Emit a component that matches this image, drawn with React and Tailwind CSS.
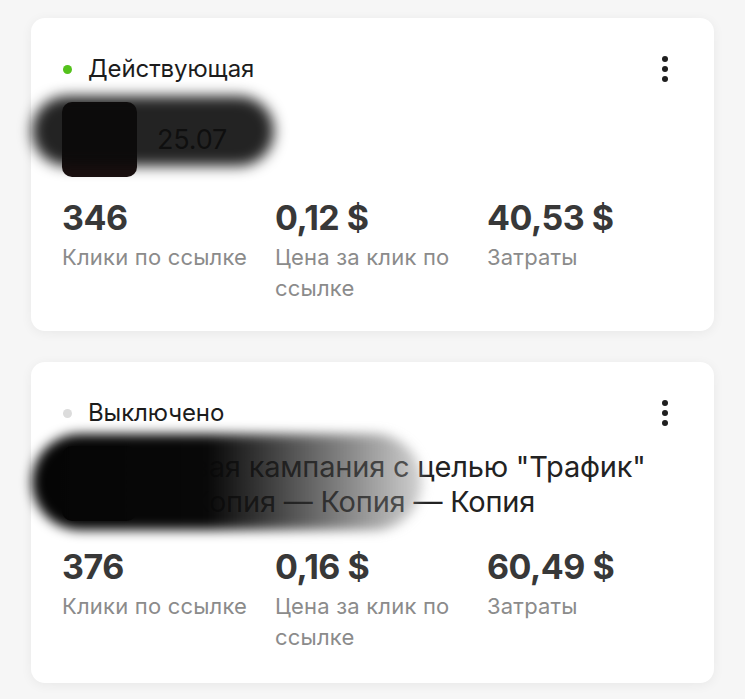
import React from 'react';

const campaigns = [
  {
    id: 1,
    status: 'Действующая',
    active: true,
    title: ['25.07'],
    clicks: '346',
    cpc: '0,12 $',
    spent: '40,53 $',
  },
  {
    id: 2,
    status: 'Выключено',
    active: false,
    title: ['Новая кампания с целью "Трафик"', '— Копия — Копия — Копия'],
    clicks: '376',
    cpc: '0,16 $',
    spent: '60,49 $',
  },
];

const Kebab = () => (
  <div className="flex flex-col items-center gap-[4px] mr-[15px]">
    <span className="block w-[6px] h-[6px] rounded-full bg-[#1f1f1f]" />
    <span className="block w-[6px] h-[6px] rounded-full bg-[#1f1f1f]" />
    <span className="block w-[6px] h-[6px] rounded-full bg-[#1f1f1f]" />
  </div>
);

const Stat = ({ value, label }) => (
  <div className="pr-2">
    <div className="text-[34px] leading-[40px] font-bold text-[#383838] tracking-[-0.5px]">{value}</div>
    <div className="mt-[4px] text-[22px] leading-[31px] text-[#8b8b8b] tracking-[0.2px]">{label}</div>
  </div>
);

const CampaignCard = ({ c }) => (
  <div className={`bg-white rounded-[14px] shadow-[0_2px_12px_rgba(0,0,0,0.06)] px-[31px] pt-[36px] ${c.active ? 'pb-[27px]' : 'pb-[30px]'}`}>
    <div className="flex items-center justify-between h-[30px]">
      <div className="flex items-center">
        <span className={`block w-[9px] h-[9px] rounded-full ml-[1px] ${c.active ? 'bg-[#54c21c]' : 'bg-[#dcdcdc]'}`} />
        <span className="ml-[16px] text-[24px] text-[#1c1c1c] tracking-[-0.1px]">{c.status}</span>
      </div>
      <Kebab />
    </div>

    {/* title row, partly hidden by a scribble */}
    <div className="relative flex items-center mt-[18px]">
      <div className="w-[75px] h-[75px] shrink-0 rounded-[10px] bg-[#1a0f0f]" />
      <div className={`${c.active ? 'ml-[20px] text-[#3a3a3a] text-[27px]' : 'ml-[17px] text-[#222] text-[29px]'} leading-[35px] tracking-[-0.2px] whitespace-nowrap`}>
        {c.title.map(line => (
          <div key={line}>{line}</div>
        ))}
      </div>
      {c.active ? (
        <div className="absolute left-[-30px] top-[-6px] w-[242px] h-[70px] rounded-[40px] bg-[#0b0b0b]/90 blur-[7px]" />
      ) : (
        <div className="absolute left-[-30px] top-[-12px] w-[390px] h-[96px] rounded-[48px] bg-linear-to-r from-[#050505] via-[#080808] via-45% to-[#9a9a9a]/45 blur-[6px]" />
      )}
    </div>

    <div className={`grid grid-cols-[213px_212px_1fr] ${c.active ? 'mt-[21px]' : 'mt-[26px]'}`}>
      <Stat value={c.clicks} label="Клики по ссылке" />
      <Stat value={c.cpc} label="Цена за клик по ссылке" />
      <Stat value={c.spent} label="Затраты" />
    </div>
  </div>
);

export default function App() {
  return (
    <div className="min-h-screen bg-[#f6f6f6] px-[31px] pt-[18px] pb-4 font-['Inter','Liberation_Sans',sans-serif]">
      <div className="w-[683px] flex flex-col gap-[31px]">
        {campaigns.map(c => (
          <CampaignCard key={c.id} c={c} />
        ))}
      </div>
    </div>
  );
}
